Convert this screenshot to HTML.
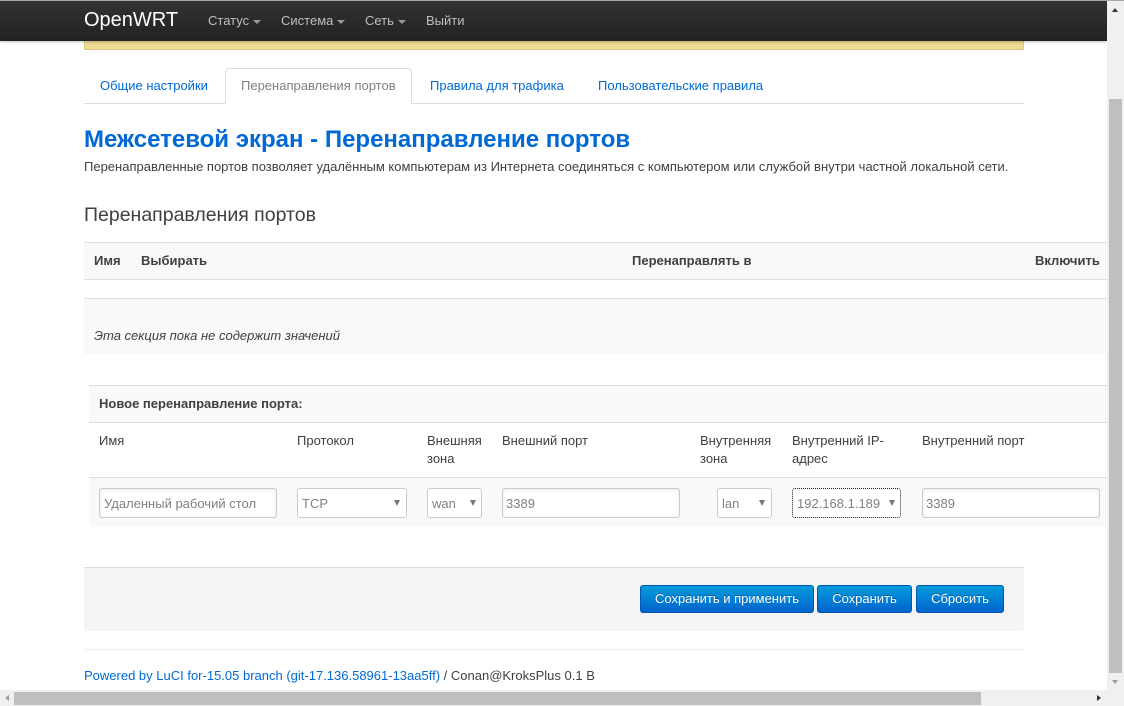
<!DOCTYPE html>
<html><head><meta charset="utf-8">
<style>
html,body{margin:0;padding:0;background:#fff}
body{width:1124px;height:706px;overflow:hidden;position:relative;font-family:"Liberation Sans",sans-serif;font-size:13px;color:#404040}
.a{position:absolute;white-space:nowrap;line-height:18px}
.b{position:absolute}
a{color:#0069d6;text-decoration:none}
.inp{position:absolute;box-sizing:border-box;height:30px;top:488px;background:#fff;border:1px solid #ccc;border-radius:3px;box-shadow:inset 0 1px 3px rgba(0,0,0,.1);font-size:13px;line-height:29px;color:#808080;padding-left:3px;white-space:nowrap}
.sel{position:absolute;box-sizing:border-box;height:30px;top:488px;background:#fff;border:1px solid #ccc;border-radius:3px;font-size:13px;line-height:29px;color:#808080;padding-left:4px;white-space:nowrap}
.sel i{position:absolute;top:11px;width:0;height:0;border-left:3px solid transparent;border-right:3px solid transparent;border-top:6px solid #777}
.btn{position:absolute;top:585px;height:28px;box-sizing:border-box;border:1px solid #0058b0;border-radius:3px;background:linear-gradient(#049cdb,#0064cd);color:#fff;text-align:center;font-size:13px;line-height:26px;text-shadow:0 -1px 0 rgba(0,0,0,.25);white-space:nowrap}
.caret{display:inline-block;width:0;height:0;border-left:4px solid transparent;border-right:4px solid transparent;border-top:4px solid #999;vertical-align:middle;margin-left:4px;margin-top:1px}
.nav{position:absolute;top:12px;line-height:18px;color:#bfbfbf;font-size:13px;white-space:nowrap}
</style></head><body>

<div class="b" style="left:84px;top:30px;width:940px;height:20px;background:#eedc94;border:1px solid #d8c680;border-top:0;box-sizing:border-box"></div>

<div class="b" style="left:84px;top:103px;width:940px;height:1px;background:#ddd"></div>
<div class="b" style="left:225px;top:68px;width:187px;height:36px;box-sizing:border-box;background:#fff;border:1px solid #ddd;border-bottom:0;border-radius:4px 4px 0 0"></div>
<a class="a" style="left:100px;top:77px">Общие настройки</a>
<div class="a" style="left:241px;top:77px;color:#808080">Перенаправления портов</div>
<a class="a" style="left:430px;top:77px">Правила для трафика</a>
<a class="a" style="left:598px;top:77px">Пользовательские правила</a>

<div class="a" style="left:84px;top:126px;font-size:24px;line-height:28px;font-weight:bold;color:#0069d6">Межсетевой экран - Перенаправление портов</div>
<div class="a" style="left:84px;top:158px">Перенаправленные портов позволяет удалённым компьютерам из Интернета соединяться с компьютером или службой внутри частной локальной сети.</div>
<div class="a" style="left:84px;top:204px;font-size:19.5px;line-height:22px">Перенаправления портов</div>

<div class="b" style="left:84px;top:242px;width:1024px;height:38px;box-sizing:border-box;background:#f9f9f9;border-top:1px solid #ddd;border-bottom:1px solid #ddd"></div>
<div class="a" style="left:94px;top:252px;font-weight:bold">Имя</div>
<div class="a" style="left:141px;top:252px;font-weight:bold">Выбирать</div>
<div class="a" style="left:632px;top:252px;font-weight:bold">Перенаправлять в</div>
<div class="a" style="left:1035px;top:252px;font-weight:bold">Включить</div>

<div class="b" style="left:84px;top:298px;width:1024px;height:56px;box-sizing:border-box;background:#f9f9f9;border-top:1px solid #ddd"></div>
<div class="a" style="left:94px;top:327px;font-style:italic">Эта секция пока не содержит значений</div>

<div class="b" style="left:89px;top:385px;width:1019px;height:38px;box-sizing:border-box;background:#f9f9f9;border-top:1px solid #ddd;border-bottom:1px solid #ddd"></div>
<div class="a" style="left:99px;top:395px;font-weight:bold">Новое перенаправление порта:</div>

<div class="a" style="left:99px;top:432px">Имя</div>
<div class="a" style="left:297px;top:432px">Протокол</div>
<div class="a" style="left:427px;top:432px">Внешняя<br>зона</div>
<div class="a" style="left:502px;top:432px">Внешний порт</div>
<div class="a" style="left:700px;top:432px">Внутренняя<br>зона</div>
<div class="a" style="left:792px;top:432px">Внутренний IP-<br>адрес</div>
<div class="a" style="left:922px;top:432px">Внутренний порт</div>

<div class="b" style="left:89px;top:477px;width:1019px;height:50px;box-sizing:border-box;background:#f9f9f9;border-top:1px solid #ddd"></div>
<div class="inp" style="left:99px;width:178px;padding-left:4px">Удаленный рабочий стол</div>
<div class="sel" style="left:297px;width:110px">TCP<i style="left:96px"></i></div>
<div class="sel" style="left:427px;width:55px">wan<i style="left:42px"></i></div>
<div class="inp" style="left:502px;width:178px">3389</div>
<div class="sel" style="left:717px;width:55px">lan<i style="left:41px"></i></div>
<div class="sel" style="left:792px;width:109px;border:1px dotted #222">192.168.1.189<i style="left:96px"></i></div>
<div class="inp" style="left:922px;width:178px">3389</div>

<div class="b" style="left:84px;top:567px;width:940px;height:64px;box-sizing:border-box;background:#f5f5f5;border-top:1px solid #ddd;border-radius:0 0 3px 3px"></div>
<div class="btn" style="left:640px;width:174px">Сохранить и применить</div>
<div class="btn" style="left:817px;width:95px">Сохранить</div>
<div class="btn" style="left:916px;width:88px">Сбросить</div>

<div class="b" style="left:84px;top:649px;width:940px;height:1px;background:#eee"></div>
<div class="a" style="left:84px;top:667px"><a>Powered by LuCI for-15.05 branch (git-17.136.58961-13aa5ff)</a> / Conan@KroksPlus 0.1 B</div>

<div class="b" style="left:0;top:0;width:1107px;height:41px;background:linear-gradient(#333,#222);box-shadow:0 1px 3px rgba(0,0,0,.25)"></div>
<div class="a" style="left:84px;top:8px;font-size:20px;line-height:24px;color:#fff">OpenWRT</div>
<div class="nav" style="left:208px">Статус<span class="caret"></span></div>
<div class="nav" style="left:281px">Система<span class="caret"></span></div>
<div class="nav" style="left:365px">Сеть<span class="caret"></span></div>
<div class="nav" style="left:426px">Выйти</div>

<div class="b" style="left:1107px;top:0;width:17px;height:692px;background:#f0f0f0"></div>
<div class="b" style="left:0;top:0;width:1124px;height:1px;background:#a8a8a8"></div>
<div class="b" style="left:1109px;top:99px;width:13px;height:574px;background:#bfbfbf"></div>
<div class="b" style="left:1112px;top:8px;border-left:3.5px solid transparent;border-right:3.5px solid transparent;border-bottom:4px solid #333"></div>
<div class="b" style="left:1112px;top:680px;border-left:3.5px solid transparent;border-right:3.5px solid transparent;border-top:4px solid #a09a96"></div>

<div class="b" style="left:0;top:690px;width:1124px;height:16px;background:#f0f0f0"></div>
<div class="b" style="left:14px;top:692px;width:967px;height:13px;background:#bfbfbf"></div>
<div class="b" style="left:5px;top:695px;border-top:3.5px solid transparent;border-bottom:3.5px solid transparent;border-right:4px solid #a09a96"></div>
<div class="b" style="left:1097px;top:695px;border-top:3.5px solid transparent;border-bottom:3.5px solid transparent;border-left:4px solid #333"></div>
</body></html>
